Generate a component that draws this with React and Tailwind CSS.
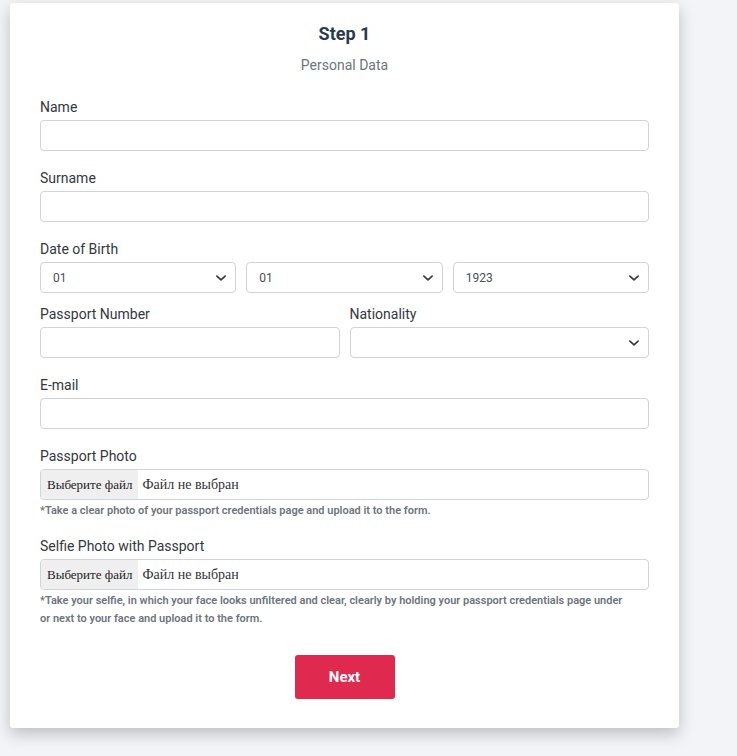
import React from "react";

const Chevron = () => (
  <svg className="pointer-events-none absolute right-[8px] top-1/2 -translate-y-1/2" width="12" height="12" viewBox="0 0 16 16">
    <path d="M2.5 5.5l5.5 5 5.5-5" fill="none" stroke="#343a40" strokeWidth="2.2" strokeLinecap="round" strokeLinejoin="round" />
  </svg>
);

const Label = ({ children }) => (
  <div className="mb-[3px] text-[14px] leading-[20px] text-[#33383d]">{children}</div>
);

const Input = () => (
  <div className="h-[31px] w-full rounded-[4px] border border-[#ced4da] bg-white" />
);

const Select = ({ value }) => (
  <div className="relative h-[31px] flex-1 rounded-[4px] border border-[#ced4da] bg-white">
    <span className="absolute left-[12px] top-1/2 -translate-y-1/2 text-[12px] text-[#495057]">{value}</span>
    <Chevron />
  </div>
);

const FileInput = () => (
  <div className="flex h-[31px] w-full items-stretch overflow-hidden rounded-[4px] border border-[#ced4da] bg-white" style={{ fontFamily: '"Liberation Serif", serif' }}>
    <div className="flex items-center bg-[#efefef] px-[6px] text-[13px] text-[#222]">Выберите файл</div>
    <div className="flex items-center pl-[4px] text-[14px] text-[#333]">Файл не выбран</div>
  </div>
);

const Help = ({ children }) => (
  <div className="mt-[2px] pr-[20px] text-[11px] font-semibold leading-[18px] text-[#6c757d]">{children}</div>
);

export default function App() {
  return (
    <div className="min-h-[756px] w-full bg-[#f3f4f8] pl-[10px] pt-[3px]" style={{ fontFamily: 'Roboto, "Noto Sans", sans-serif' }}>
      <div className="w-[669px] rounded-[3px] bg-white px-[30px] pb-[29px] pt-[20px] shadow-[0_6px_16px_rgba(0,0,0,0.22)]">
        <div className="text-center text-[18px] font-bold leading-[22px] text-[#2b3a4d]">Step 1</div>
        <div className="mt-[11px] text-center text-[14px] leading-[18px] text-[#6c757d]">Personal Data</div>

        <div className="mt-[23px]">
          <Label>Name</Label>
          <Input />
        </div>
        <div className="mt-[17px]">
          <Label>Surname</Label>
          <Input />
        </div>
        <div className="mt-[17px]">
          <Label>Date of Birth</Label>
          <div className="flex gap-[10px]">
            <Select value="01" />
            <Select value="01" />
            <Select value="1923" />
          </div>
        </div>
        <div className="mt-[11px] flex gap-[10px]">
          <div className="flex-1">
            <Label>Passport Number</Label>
            <Input />
          </div>
          <div className="flex-1">
            <Label>Nationality</Label>
            <div className="flex h-[31px]">
              <Select value="" />
            </div>
          </div>
        </div>
        <div className="mt-[17px]">
          <Label>E-mail</Label>
          <Input />
        </div>
        <div className="mt-[17px]">
          <Label>Passport Photo</Label>
          <FileInput />
          <Help>*Take a clear photo of your passport credentials page and upload it to the form.</Help>
        </div>
        <div className="mt-[16px]">
          <Label>Selfie Photo with Passport</Label>
          <FileInput />
          <Help>
            *Take your selfie, in which your face looks unfiltered and clear, clearly by holding your passport credentials page under or next to your face and upload it to the form.
          </Help>
        </div>
        <div className="mt-[27px] flex justify-center">
          <button className="h-[44px] w-[100px] rounded-[3px] bg-[#e0294f] text-[15px] font-bold text-white">Next</button>
        </div>
      </div>
    </div>
  );
}
